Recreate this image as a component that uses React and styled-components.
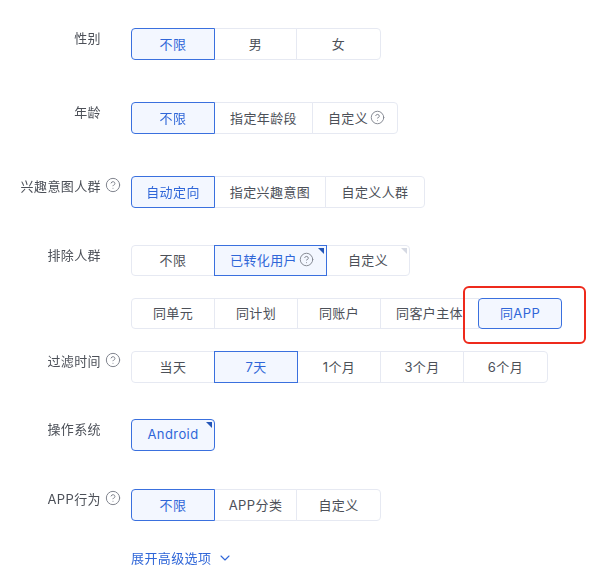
import React from "react";
import styled, { createGlobalStyle } from "styled-components";
import { ChevronDown, CircleHelp } from "lucide-react";

const Global = createGlobalStyle`
  html, body {
    margin: 0;
    padding: 0;
    background: #fff;
  }
  * {
    box-sizing: border-box;
  }
`;

const Page = styled.div`
  width: 612px;
  height: 577px;
  padding-top: 28px;
  overflow: hidden;
  font-family: "Inter", "Noto Sans CJK SC", sans-serif;
  font-size: 13px;
  letter-spacing: 0.4px;
  color: #4c5058;
  filter: blur(0.45px);
`;

const Row = styled.div`
  display: flex;
  align-items: flex-start;
  height: ${(props) => props.$h || 32}px;
  margin-bottom: ${(props) => props.$after}px;
`;

const Label = styled.div`
  flex: none;
  width: 131px;
  display: flex;
  align-items: center;
  height: 18px;
`;

const LabelText = styled.span`
  width: 101px;
  text-align: right;
  white-space: nowrap;
`;

const Help = styled(CircleHelp)`
  flex: none;
  margin-left: ${(props) => props.$left}px;
  color: #80848e;
`;

const Group = styled.div`
  display: flex;
  height: 100%;
`;

const Segment = styled.div`
  position: relative;
  flex: none;
  width: ${(props) => props.$w}px;
  height: 100%;
  margin-left: -1px;
  padding: 0 0 2px ${(props) => (props.$help ? 3 : 0)}px;
  display: flex;
  align-items: center;
  justify-content: center;
  white-space: nowrap;
  border: 1px solid ${(props) => (props.$active ? "#3a70de" : "#e6e9f2")};
  background: ${(props) => (props.$active ? "#f3f7ff" : "#fff")};
  color: ${(props) => (props.$active ? "#2f66d8" : "#4c5058")};
  z-index: ${(props) => (props.$active ? 1 : 0)};
  &:first-child {
    margin-left: 0;
    border-radius: 4px 0 0 4px;
  }
  &:last-child {
    border-radius: ${(props) => (props.$round ? "4px" : "0 4px 4px 0")};
  }
  &:only-child {
    border-radius: 4px;
  }
`;

const Corner = styled.i`
  position: absolute;
  top: 2px;
  right: 2px;
  width: 0;
  height: 0;
  border-top: 6px solid ${(props) => (props.$muted ? "#d5d9e3" : "#2456b8")};
  border-left: 6px solid transparent;
`;

const RedBox = styled.span`
  position: absolute;
  top: -13px;
  left: -16px;
  right: -25px;
  bottom: -16px;
  border: 2.5px solid #ee2a1c;
  border-radius: 6px;
  z-index: 2;
`;

const Expand = styled.div`
  display: flex;
  align-items: center;
  gap: 6px;
  margin-left: 131px;
  color: #2f66d8;
`;

const rows = [
  { label: "性别", after: 42, items: [["不限", 84, true], ["男", 83], ["女", 85]] },
  {
    label: "年龄",
    after: 42,
    items: [["不限", 84, true], ["指定年龄段", 99], ["自定义", 86, false, "help"]],
  },
  {
    label: "兴趣意图人群",
    help: true,
    after: 37,
    items: [["自动定向", 84, true], ["指定兴趣意图", 112], ["自定义人群", 100]],
  },
  {
    label: "排除人群",
    h: 31,
    after: 22,
    items: [
      ["不限", 84],
      ["已转化用户", 113, true, "help", "corner"],
      ["自定义", 84, false, null, "muted"],
    ],
  },
  {
    label: "",
    h: 31,
    after: 22,
    items: [
      ["同单元", 84],
      ["同计划", 84],
      ["同账户", 84],
      ["同客户主体", 99],
      ["同APP", 84, true, null, "picked"],
    ],
  },
  {
    label: "过滤时间",
    help: true,
    after: 36,
    items: [["当天", 84], ["7天", 84, true], ["1个月", 84], ["3个月", 84], ["6个月", 85]],
  },
  { label: "操作系统", after: 38, items: [["Android", 84, true, null, "corner"]] },
  {
    label: "APP行为",
    help: true,
    after: 27,
    items: [["不限", 84, true], ["APP分类", 83], ["自定义", 85]],
  },
];

export default function App() {
  return (
    <Page>
      <Global />
      {rows.map((row, i) => (
        <Row key={i} $h={row.h} $after={row.after}>
          <Label>
            <LabelText>{row.label}</LabelText>
            {row.help && <Help size={16} strokeWidth={1.5} $left={4} />}
          </Label>
          <Group>
            {row.items.map(([text, w, active, help, mark]) => (
              <Segment
                key={text}
                $w={w}
                $active={active}
                $help={help}
                $round={mark === "picked"}
              >
                {text}
                {help && <Help size={15} strokeWidth={1.5} $left={2} />}
                {(mark === "corner" || mark === "muted") && <Corner $muted={mark === "muted"} />}
                {mark === "picked" && <RedBox />}
              </Segment>
            ))}
          </Group>
        </Row>
      ))}
      <Expand>
        展开高级选项
        <ChevronDown size={16} strokeWidth={1.6} />
      </Expand>
    </Page>
  );
}
